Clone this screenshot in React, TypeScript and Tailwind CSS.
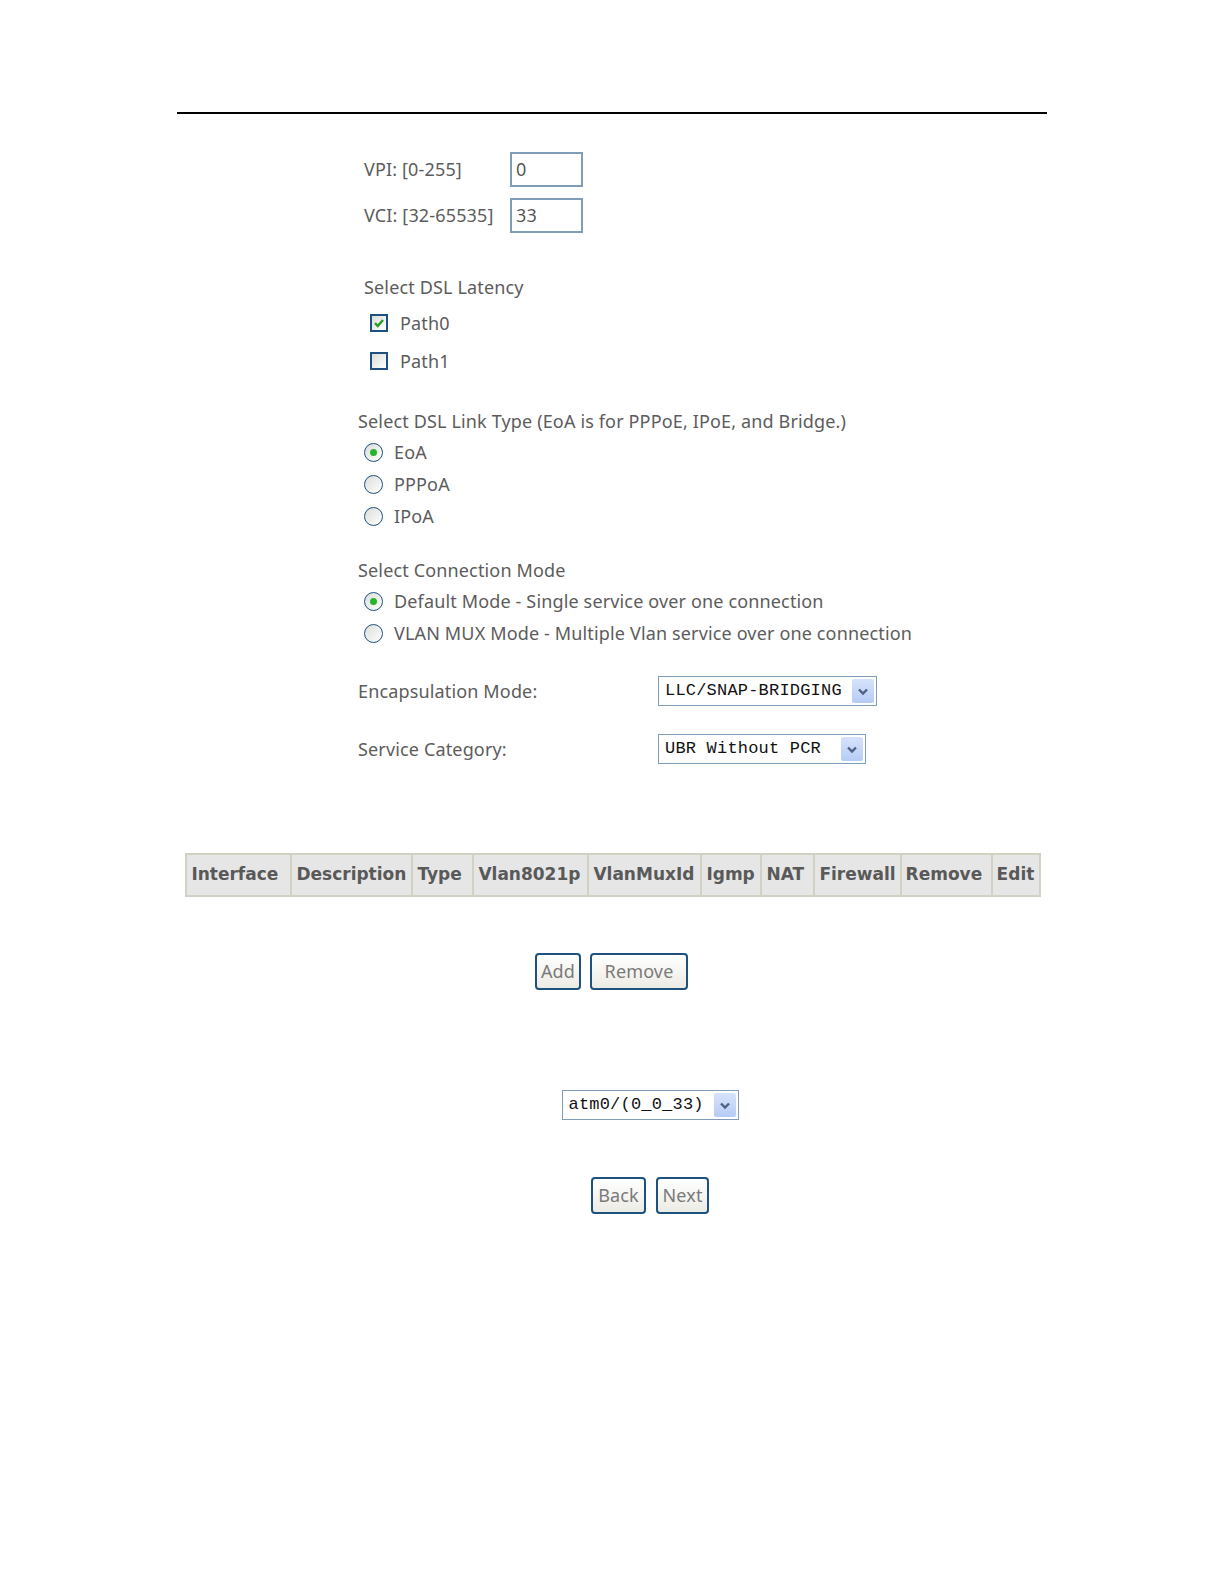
import React from "react";

const font = { fontFamily: "'DejaVu Sans', Verdana, sans-serif" };

function Check({ checked }: { checked?: boolean }) {
  return (
    <span className="inline-flex h-[18px] w-[18px] items-center justify-center border-2 border-[#1c5180] bg-gradient-to-br from-[#dcdcd7] to-[#ffffff]">
      {checked && (
        <svg viewBox="0 0 12 12" className="h-[12px] w-[12px]">
          <path d="M2 6.2 L4.8 9 L10 3" fill="none" stroke="#21a121" strokeWidth="2.4" />
        </svg>
      )}
    </span>
  );
}

function Radio({ checked }: { checked?: boolean }) {
  return (
    <span className="inline-flex h-[19px] w-[19px] items-center justify-center rounded-full border-[1.5px] border-[#1c5180] bg-gradient-to-br from-[#dcdcd7] to-[#ffffff]">
      {checked && <span className="h-[7px] w-[7px] rounded-full bg-[#29b329]" />}
    </span>
  );
}

function Select({ value, width }: { value: string; width: string }) {
  return (
    <div className={`flex h-[30px] items-center justify-between border border-[#7f9db9] bg-white pl-[6px] pr-[2px] ${width}`}>
      <span className="text-[17px] tracking-[0.2px] text-[#111]" style={{ fontFamily: "'Liberation Mono', monospace" }}>
        {value}
      </span>
      <span className="flex h-[24px] w-[22px] items-center justify-center rounded-[2px] bg-gradient-to-b from-[#d7e3fb] to-[#b6cbf5]">
        <svg viewBox="0 0 12 9" className="h-[9px] w-[12px]">
          <path d="M2 2.5 L6 6.5 L10 2.5" fill="none" stroke="#4d6185" strokeWidth="2.4" />
        </svg>
      </span>
    </div>
  );
}

function Button({ label, width }: { label: string; width: string }) {
  return (
    <button
      className={`h-[37px] rounded-[4px] border-2 border-[#1c5180] bg-gradient-to-b from-[#ffffff] to-[#ecebe4] text-[18px] text-[#7a7a7a] ${width}`}
      style={{ fontFamily: "'Noto Sans', Tahoma, sans-serif" }}
    >
      {label}
    </button>
  );
}

const columns: [string, number][] = [
  ["Interface", 105],
  ["Description", 121],
  ["Type", 61],
  ["Vlan8021p", 115],
  ["VlanMuxId", 113],
  ["Igmp", 60],
  ["NAT", 53],
  ["Firewall", 85],
  ["Remove", 91],
  ["Edit", 48],
];

export default function App() {
  return (
    <div
      className="min-h-[1584px] w-[1224px] bg-white text-[18px] tracking-[0.15px] text-[#5c5c5c]"
      style={{ fontFamily: "'Noto Sans', Tahoma, sans-serif" }}
    >
      <div className="pt-[112px]">
        <div className="mx-[177px] h-[2px] bg-black" />
      </div>

      <div className="ml-[364px] mt-[38px] flex flex-col gap-[11px]">
        <div className="flex h-[35px] items-center">
          <span className="w-[146px]">VPI: [0-255]</span>
          <div className="flex h-[35px] w-[73px] items-center border-2 border-[#7f9db9] pl-[4px] text-black/70">0</div>
        </div>
        <div className="flex h-[35px] items-center">
          <span className="w-[146px]">VCI: [32-65535]</span>
          <div className="flex h-[35px] w-[73px] items-center border-2 border-[#7f9db9] pl-[4px] text-black/70">33</div>
        </div>
      </div>

      <div className="ml-[364px] mt-[42px] flex h-[24px] items-center">Select DSL Latency</div>
      <div className="ml-[370px] mt-[12px] flex h-[24px] items-center gap-[12px]">
        <Check checked />
        <span>Path0</span>
      </div>
      <div className="ml-[370px] mt-[14px] flex h-[24px] items-center gap-[12px]">
        <Check />
        <span>Path1</span>
      </div>

      <div className="ml-[358px] mt-[36px] flex h-[24px] items-center">
        Select DSL Link Type (EoA is for PPPoE, IPoE, and Bridge.)
      </div>
      <div className="ml-[364px] mt-[7px] flex flex-col gap-[8px]">
        {["EoA", "PPPoA", "IPoA"].map((t, i) => (
          <div key={t} className="flex h-[24px] items-center gap-[11px]">
            <Radio checked={i === 0} />
            <span>{t}</span>
          </div>
        ))}
      </div>

      <div className="ml-[358px] mt-[30px] flex h-[24px] items-center">Select Connection Mode</div>
      <div className="ml-[364px] mt-[7px] flex flex-col gap-[8px]">
        <div className="flex h-[24px] items-center gap-[11px]">
          <Radio checked />
          <span>Default Mode - Single service over one connection</span>
        </div>
        <div className="flex h-[24px] items-center gap-[11px]">
          <Radio />
          <span>VLAN MUX Mode - Multiple Vlan service over one connection</span>
        </div>
      </div>

      <div className="ml-[358px] mt-[31px] flex items-center">
        <span className="w-[300px]">Encapsulation Mode:</span>
        <Select value="LLC/SNAP-BRIDGING" width="w-[219px]" />
      </div>
      <div className="ml-[358px] mt-[28px] flex items-center">
        <span className="w-[300px]">Service Category:</span>
        <Select value="UBR Without PCR" width="w-[208px]" />
      </div>

      <div className="mt-[89px] flex justify-center pl-[2px]">
        <table className="border-collapse border-2 border-[#c9c9b4] bg-[#e6e6e6] tracking-normal" style={font}>
          <thead>
            <tr className="h-[42px]">
              {columns.map(([c, w]) => (
                <th
                  key={c}
                  style={{ width: w }}
                  className="border-2 border-[#d2d2c4] px-[4px] text-left text-[17px] font-bold text-[#595959]"
                >
                  {c}
                </th>
              ))}
            </tr>
          </thead>
        </table>
      </div>

      <div className="mt-[56px] flex justify-center gap-[9px] pr-[1px]">
        <Button label="Add" width="w-[46px]" />
        <Button label="Remove" width="w-[98px]" />
      </div>

      <div className="mt-[100px] flex justify-center pl-[76px]">
        <Select value="atm0/(0_0_33)" width="w-[177px]" />
      </div>

      <div className="mt-[57px] flex justify-center gap-[10px] pl-[76px]">
        <Button label="Back" width="w-[55px]" />
        <Button label="Next" width="w-[53px]" />
      </div>
    </div>
  );
}
